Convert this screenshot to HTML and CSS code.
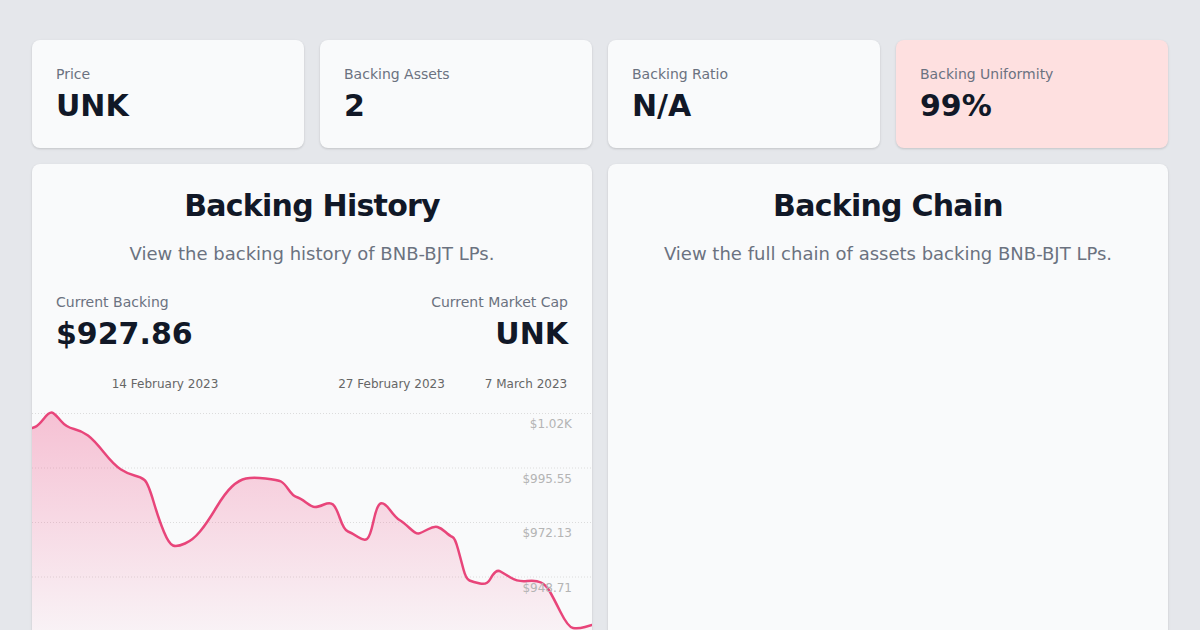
FILE: index.html
```html
<!DOCTYPE html>
<html>
<head>
<meta charset="utf-8">
<link rel="stylesheet" href="styles.css">
</head>
<body>
<div class="page">
  <div class="stats">
    <div class="stat"><div class="stat-label">Price</div><div class="stat-value">UNK</div></div>
    <div class="stat"><div class="stat-label">Backing Assets</div><div class="stat-value">2</div></div>
    <div class="stat"><div class="stat-label">Backing Ratio</div><div class="stat-value">N/A</div></div>
    <div class="stat stat-warn"><div class="stat-label">Backing Uniformity</div><div class="stat-value">99%</div></div>
  </div>
  <div class="panels">
    <div class="panel">
      <h2 class="panel-title">Backing History</h2>
      <p class="panel-sub">View the backing history of BNB-BJT LPs.</p>
      <div class="figures">
        <div class="figure"><div class="fig-label">Current Backing</div><div class="fig-value">$927.86</div></div>
        <div class="figure figure-right"><div class="fig-label">Current Market Cap</div><div class="fig-value">UNK</div></div>
      </div>
      <svg class="chart" width="560" height="300" viewBox="0 0 560 300">
        <defs>
          <linearGradient id="fillg" x1="0" y1="40" x2="0" y2="270" gradientUnits="userSpaceOnUse">
            <stop offset="0" stop-color="#f06292" stop-opacity="0.38"/>
            <stop offset="1" stop-color="#f06292" stop-opacity="0.04"/>
          </linearGradient>
        </defs>
        <g class="dates">
          <text x="133" y="18" text-anchor="middle">14 February 2023</text>
          <text x="359.5" y="18" text-anchor="middle">27 February 2023</text>
          <text x="494" y="18" text-anchor="middle">7 March 2023</text>
        </g>
        <g class="grid">
          <line x1="0" x2="560" y1="43.5" y2="43.5"/>
          <line x1="0" x2="560" y1="98" y2="98"/>
          <line x1="0" x2="560" y1="152.5" y2="152.5"/>
          <line x1="0" x2="560" y1="207" y2="207"/>
          <line x1="0" x2="560" y1="261.5" y2="261.5"/>
        </g>
        <path class="area" d="M0,58 L3,57 Q6,56 12,48.5 Q18,41 21,43 Q24,45 29,51 Q34,57 42,59 Q50,61 56,65.5 Q62,70 72,82.5 Q82,95 89,99.5 Q96,104 102.5,105.5 Q109,107 112.5,110 Q116,113 121.5,131.5 Q127,150 132,162 Q137,174 141,175.5 Q145,177 153,173.5 Q161,170 168,161.5 Q175,153 184,138 Q193,123 200,116.5 Q207,110 214,108.5 Q221,107 233.5,108.5 Q246,110 249,111.5 Q252,113 256.5,119.5 Q261,126 264.5,127 Q268,128 274,132.5 Q280,137 283,137 Q286,137 292,134.5 Q298,132 301,134.5 Q304,137 308,148.5 Q312,160 316,161.5 Q320,163 326,167 Q332,171 335,169 Q338,167 341.5,151 Q345,135 348.5,133.5 Q352,132 358,140 Q364,148 367.5,150 Q371,152 377.5,158 Q384,164 386.5,163.5 Q389,163 395.5,159.5 Q402,156 405.5,157 Q409,158 413.5,162 Q418,166 420.5,167 Q423,168 426,179 Q429,190 431.5,199.5 Q434,209 437.5,210.5 Q441,212 448,213.5 Q455,215 458,209.5 Q461,204 463.5,202 Q466,200 468.5,201.5 Q471,203 478.5,207.5 Q486,212 495,211 Q504,210 509,212.5 Q514,215 517.5,221 Q521,227 528.5,242 Q536,257 541,258 Q546,259 553,257 L560,255 L560,300 L0,300 Z"/>
        <path class="line" d="M0,58 L3,57 Q6,56 12,48.5 Q18,41 21,43 Q24,45 29,51 Q34,57 42,59 Q50,61 56,65.5 Q62,70 72,82.5 Q82,95 89,99.5 Q96,104 102.5,105.5 Q109,107 112.5,110 Q116,113 121.5,131.5 Q127,150 132,162 Q137,174 141,175.5 Q145,177 153,173.5 Q161,170 168,161.5 Q175,153 184,138 Q193,123 200,116.5 Q207,110 214,108.5 Q221,107 233.5,108.5 Q246,110 249,111.5 Q252,113 256.5,119.5 Q261,126 264.5,127 Q268,128 274,132.5 Q280,137 283,137 Q286,137 292,134.5 Q298,132 301,134.5 Q304,137 308,148.5 Q312,160 316,161.5 Q320,163 326,167 Q332,171 335,169 Q338,167 341.5,151 Q345,135 348.5,133.5 Q352,132 358,140 Q364,148 367.5,150 Q371,152 377.5,158 Q384,164 386.5,163.5 Q389,163 395.5,159.5 Q402,156 405.5,157 Q409,158 413.5,162 Q418,166 420.5,167 Q423,168 426,179 Q429,190 431.5,199.5 Q434,209 437.5,210.5 Q441,212 448,213.5 Q455,215 458,209.5 Q461,204 463.5,202 Q466,200 468.5,201.5 Q471,203 478.5,207.5 Q486,212 495,211 Q504,210 509,212.5 Q514,215 517.5,221 Q521,227 528.5,242 Q536,257 541,258 Q546,259 553,257 L560,255"/>
        <g class="yaxis">
          <text x="540" y="58" text-anchor="end">$1.02K</text>
          <text x="540" y="113" text-anchor="end">$995.55</text>
          <text x="540" y="167" text-anchor="end">$972.13</text>
          <text x="540" y="222" text-anchor="end">$948.71</text>
        </g>
      </svg>
    </div>
    <div class="panel">
      <h2 class="panel-title">Backing Chain</h2>
      <p class="panel-sub">View the full chain of assets backing BNB-BJT LPs.</p>
    </div>
  </div>
</div>
</body>
</html>
```

FILE: styles.css
```css
html, body {
  margin: 0;
  padding: 0;
  height: 630px;
  overflow: hidden;
}
body {
  background: #e5e7eb;
  font-family: "DejaVu Sans", sans-serif;
  color: #111827;
}
.page {
  padding: 40px 32px 0;
}
.stats {
  display: grid;
  grid-template-columns: repeat(4, 1fr);
  gap: 16px;
}
.stat {
  background: #f9fafb;
  border-radius: 8px;
  padding: 24px;
  box-shadow: 0 1px 3px rgba(0,0,0,0.1), 0 1px 2px rgba(0,0,0,0.06);
}
.stat-warn {
  background: #fee0e0;
}
.stat-label {
  font-size: 14px;
  line-height: 20px;
  color: #6b7280;
}
.stat-value {
  margin-top: 4px;
  font-size: 30px;
  line-height: 36px;
  font-weight: bold;
  color: #111827;
}
.panels {
  margin-top: 16px;
  display: grid;
  grid-template-columns: 1fr 1fr;
  gap: 16px;
}
.panel {
  background: #f9fafb;
  border-radius: 8px;
  padding: 24px 0 40px;
  box-shadow: 0 1px 3px rgba(0,0,0,0.1), 0 1px 2px rgba(0,0,0,0.06);
  overflow: hidden;
}
.panel-title {
  margin: 0;
  text-align: center;
  font-size: 30px;
  line-height: 36px;
  font-weight: bold;
  letter-spacing: -0.025em;
  color: #111827;
}
.panel-sub {
  margin: 16px 0 0;
  text-align: center;
  font-size: 18px;
  line-height: 28px;
  color: #6b7280;
}
.figures {
  margin-top: 24px;
  padding: 0 24px;
  display: flex;
  justify-content: space-between;
}
.figure-right {
  text-align: right;
}
.fig-label {
  font-size: 14px;
  line-height: 20px;
  color: #6b7280;
}
.fig-value {
  margin-top: 4px;
  font-size: 30px;
  line-height: 36px;
  font-weight: bold;
  color: #111827;
}
.chart {
  display: block;
  margin-top: 18px;
}
.dates text {
  font-family: "DejaVu Sans", sans-serif;
  font-size: 12px;
  fill: #666;
}
.grid line {
  stroke: #dcdcdc;
  stroke-width: 1;
  stroke-dasharray: 1 2;
}
.area {
  fill: url(#fillg);
}
.line {
  fill: none;
  stroke: #e8457a;
  stroke-width: 2.5;
  stroke-linejoin: round;
  stroke-linecap: round;
}
.yaxis text {
  font-family: "DejaVu Sans", sans-serif;
  font-size: 12px;
  fill: #b4b4b4;
}
```
